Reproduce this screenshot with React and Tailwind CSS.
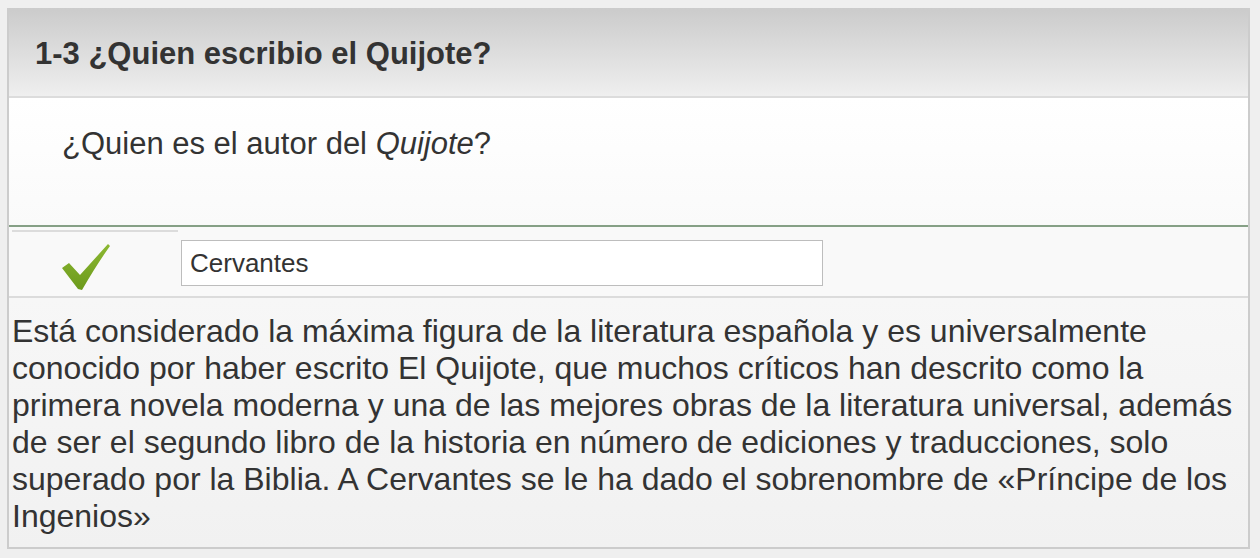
import React from "react";

const Check = () => (
  <svg width="50" height="48" viewBox="0 0 50 48">
    <defs>
      <linearGradient id="chk" x1="0" y1="0" x2="0" y2="1">
        <stop offset="0" stopColor="#8cb832" />
        <stop offset="1" stopColor="#6c9a1c" />
      </linearGradient>
    </defs>
    <path
      d="M0 24 L7 19 L18 31 L46 0 L48 2 Q35 20 20 46 L16 45 Z"
      fill="url(#chk)"
    />
  </svg>
);

export default function App() {
  return (
    <div className="min-h-[558px] bg-[#efefef] pt-2 pl-[7px] pr-[10px] font-['Liberation_Sans',Arial,sans-serif] text-[#333]">
      <div className="border-x-2 border-b-2 border-[#cccccc]">
        {/* encabezado */}
        <div className="h-[90px] bg-gradient-to-b from-[#cbcbcb] to-[#efefef] border-b-2 border-[#dcdcdc] flex items-center pl-[26px] pt-1">
          <h2 className="text-[31px] font-bold">1-3 ¿Quien escribio el Quijote?</h2>
        </div>

        {/* pregunta */}
        <div className="h-[129px] bg-gradient-to-b from-white to-[#fafafa] border-b-2 border-[#86a086] pl-[53px] pt-[29px]">
          <p className="text-[31px] leading-[34px]">
            ¿Quien es el autor del <em>Quijote</em>?
          </p>
        </div>

        {/* respuesta */}
        <div className="h-[71px] bg-[#f9f9f9] border-b-2 border-[#dcdcdc] flex flex-col">
          <div className="mt-[3px] ml-[3px] w-[166px] h-[2px] bg-[#dcdcdc]" />
          <div className="flex items-start">
            <div className="w-[172px] pl-[53px] pt-[12px]">
              <Check />
            </div>
            <input
              readOnly
              value="Cervantes"
              className="mt-[8px] w-[642px] h-[46px] border border-[#bdbdbd] bg-white px-2 text-[26px] text-[#333] outline-none"
            />
          </div>
        </div>

        {/* retroalimentación */}
        <div className="bg-gradient-to-b from-[#f7f7f7] to-[#f1f1f1] px-[3px] pt-[15px] pb-3 text-[32px] leading-[normal]">
          Está considerado la máxima figura de la literatura española y es universalmente conocido por haber escrito El Quijote, que muchos críticos han descrito como la primera novela moderna y una de las mejores obras de la literatura universal, además de ser el segundo libro de la historia en número de ediciones y traducciones, solo superado por la Biblia. A Cervantes se le ha dado el sobrenombre de «Príncipe de los Ingenios»
        </div>
      </div>
    </div>
  );
}
